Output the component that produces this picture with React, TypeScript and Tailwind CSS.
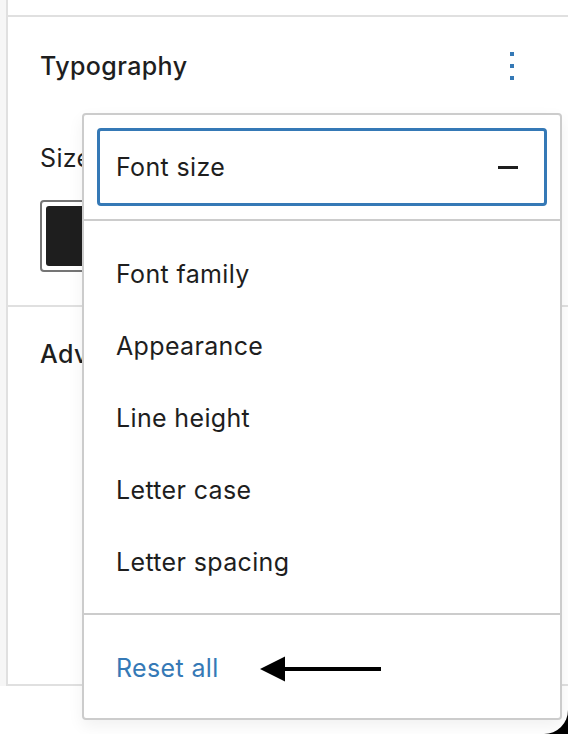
const menuItems = ["Font family", "Appearance", "Line height", "Letter case", "Letter spacing"];

export default function App() {
  return (
    <div className="h-[734px] w-[568px] overflow-hidden bg-black font-['Inter',sans-serif] text-[#1e1e1e]">
      <div className="relative h-full w-full overflow-hidden rounded-br-[24px] bg-white">
        <div className="h-[686px] bg-[#f6f6f6] pl-[6px]">
          <div className="h-full border-b-2 border-l-2 border-[#e0e0e0] bg-white pt-[15px]">
            <div className="h-[292px] border-t-2 border-b-2 border-[#e0e0e0] px-[32px] pt-[33px]">
              <div className="flex items-center justify-between pr-[22px]">
                <h2 className="text-[25px] leading-[32px] font-[550] tracking-[0.4px]">Typography</h2>
                <div className="flex flex-col gap-[8px]">
                  <span className="size-[4px] bg-[#3579b6]" />
                  <span className="size-[4px] bg-[#3579b6]" />
                  <span className="size-[4px] bg-[#3579b6]" />
                </div>
              </div>
              <div className="mt-[60px] text-[25px] leading-[32px] tracking-[0.35px]">Size</div>
              <div className="mt-[26px] h-[72px] w-[100px] rounded-[4px] border-2 border-[#757575] p-[4px]">
                <div className="h-full rounded-[3px] bg-[#1e1e1e]" />
              </div>
            </div>
            <div className="px-[32px] pt-[31px] text-[25px] leading-[32px] font-[550] tracking-[0.4px]">Advanced</div>
          </div>
        </div>

        <div className="absolute top-[113px] left-[82px] flex h-[607px] w-[480px] flex-col rounded-[4px] border-2 border-[#cccccc] bg-white shadow-[0_6px_16px_rgba(0,0,0,0.06)]">
          <div className="border-b-2 border-[#cccccc] p-[13px]">
            <div className="flex h-[78px] items-center justify-between rounded-[4px] border-[3px] border-[#3579b6] pr-[26px] pl-[16px]">
              <span className="pt-[2px] text-[25px] tracking-[0.35px]">Font size</span>
              <span className="h-[3px] w-[20px] bg-[#1e1e1e]" />
            </div>
          </div>
          <ul className="flex flex-1 flex-col gap-[40px] border-b-2 border-[#cccccc] px-[32px] pt-[37px]">
            {menuItems.map((item) => (
              <li key={item} className="text-[25px] leading-[32px] tracking-[0.35px]">{item}</li>
            ))}
          </ul>
          <div className="flex h-[103px] items-center px-[32px] pt-[4px]">
            <span className="text-[25px] tracking-[0.35px] text-[#3579b6]">Reset all</span>
            <svg className="ml-[41.5px]" width="122" height="26" viewBox="0 0 122 26" fill="none">
              <path d="M0 13 L25 0.5 V11 H121 V15 H25 V25.5 Z" fill="#000" />
            </svg>
          </div>
        </div>
      </div>
    </div>
  );
}
